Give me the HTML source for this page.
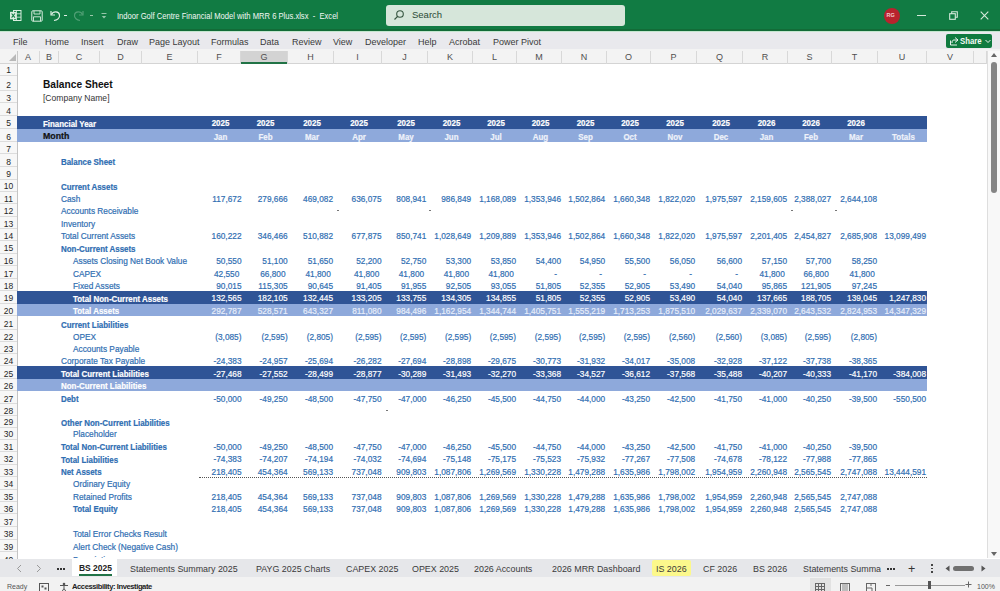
<!DOCTYPE html>
<html><head><meta charset="utf-8"><style>
*{margin:0;padding:0;box-sizing:border-box}
html,body{width:1000px;height:591px;overflow:hidden;background:#fff;font-family:"Liberation Sans",sans-serif}
.a{position:absolute}
.t{position:absolute;white-space:nowrap;line-height:1}
.c{font-size:9px;color:#2f6eb2;transform:scaleX(0.92);-webkit-text-stroke:0.2px currentColor}
.tl{transform-origin:0 50%}.tr{transform-origin:100% 50%}
.n{text-align:right}
.b{font-weight:bold;font-size:8.8px;transform:scaleX(0.9)}
.ch{position:absolute;top:51px;height:12.5px;font-size:9px;color:#505050;text-align:center;line-height:12.5px;border-right:1px solid #d8d8d8}
.rh{position:absolute;left:0;width:17px;font-size:8.3px;color:#333;text-align:center;border-bottom:1px solid #dcdcdc}
.mt{position:absolute;top:37px;font-size:9px;color:#3a3a3a;white-space:nowrap;line-height:10px}
.tab{position:absolute;top:563.4px;font-size:9.9px;color:#3a3a3a;white-space:nowrap;line-height:11px;transform:scaleX(0.9);transform-origin:0 50%}
</style></head><body>

<div class="a" style="left:0;top:0;width:1000px;height:31px;background:#117b43"></div>
<div class="a" style="left:0;top:28.6px;width:1000px;height:2.2px;background:#126b37"></div>
<div class="a" style="left:0;top:30.8px;width:1000px;height:1.2px;background:#c4e6cf"></div>
<div class="a" style="left:386px;top:5px;width:239px;height:21px;background:#d6e6da;border-radius:3px"></div>
<div class="t" style="left:412px;top:10px;font-size:9.5px;color:#2a4a35">Search</div>
<svg class="a" style="left:393px;top:9px" width="12" height="12" viewBox="0 0 12 12"><circle cx="7" cy="5" r="3.3" fill="none" stroke="#35553f" stroke-width="1.1"/><line x1="4.6" y1="7.4" x2="1.5" y2="10.5" stroke="#35553f" stroke-width="1.2"/></svg>
<div class="t" style="left:117px;top:12px;font-size:8.6px;transform:scaleX(0.885);transform-origin:0 50%;color:#f2f8f4">Indoor Golf Centre Financial Model with MRR 6 Plus.xlsx&nbsp;&nbsp;-&nbsp;&nbsp;Excel</div>
<svg class="a" style="left:9px;top:9px" width="13" height="13" viewBox="0 0 13 13"><rect x="4.5" y="1.5" width="7.5" height="10" fill="none" stroke="#d9eee0" stroke-width="1"/><line x1="7.5" y1="1.5" x2="7.5" y2="11.5" stroke="#d9eee0" stroke-width="0.8"/><line x1="7.5" y1="4.8" x2="12" y2="4.8" stroke="#d9eee0" stroke-width="0.8"/><line x1="7.5" y1="8.2" x2="12" y2="8.2" stroke="#d9eee0" stroke-width="0.8"/><rect x="1" y="2.8" width="6.5" height="7.5" fill="#d9eee0"/><path d="M2.6 4.5 L5.9 8.6 M5.9 4.5 L2.6 8.6" stroke="#117b43" stroke-width="1.1"/></svg>
<svg class="a" style="left:31px;top:9.5px" width="12" height="12" viewBox="0 0 12 12"><rect x="0.8" y="0.8" width="10.4" height="10.4" rx="1" fill="none" stroke="#d9eee0" stroke-width="1"/><path d="M3 0.8 V4 H9 V0.8" fill="none" stroke="#d9eee0" stroke-width="0.9"/><path d="M2.5 11.2 V6.8 H9.5 V11.2" fill="none" stroke="#d9eee0" stroke-width="0.9"/></svg>
<svg class="a" style="left:49px;top:8px" width="14" height="14" viewBox="0 0 14 14"><path d="M2 3 L2 7 L6 7" fill="none" stroke="#dff0e5" stroke-width="1.2"/><path d="M2.5 6.5 C4 3 10 3 10.5 7 C11 10 8 12 5 12.5" fill="none" stroke="#dff0e5" stroke-width="1.2"/></svg>
<div class="a" style="left:64px;top:15px;width:3px;height:1px;background:#dff0e5"></div>
<svg class="a" style="left:71px;top:8px" width="14" height="14" viewBox="0 0 14 14" opacity="0.3"><path d="M12 3 L12 7 L8 7" fill="none" stroke="#dff0e5" stroke-width="1.2"/><path d="M11.5 6.5 C10 3 4 3 3.5 7 C3 10 6 12 9 12.5" fill="none" stroke="#dff0e5" stroke-width="1.2"/></svg>
<div class="a" style="left:90px;top:15px;width:3px;height:1px;background:#9cc7aa"></div>
<svg class="a" style="left:100px;top:12px" width="8" height="9" viewBox="0 0 8 9" opacity="0.7"><line x1="1.5" y1="1.5" x2="6.5" y2="1.5" stroke="#cfe5d6"/><path d="M1.8 4 L6.2 4 L4 6.5 Z" fill="#cfe5d6"/></svg>
<div class="a" style="left:883.5px;top:7.5px;width:16px;height:16px;border-radius:50%;background:#b8232d"></div>
<div class="t" style="left:886.5px;top:12.5px;font-size:5.5px;color:#f3c9cc;font-weight:bold">RG</div>
<div class="a" style="left:917px;top:14.5px;width:9px;height:1.3px;background:#d5e9db"></div>
<svg class="a" style="left:949px;top:11px" width="9" height="9" viewBox="0 0 9 9"><rect x="0.7" y="2.7" width="5.6" height="5.6" fill="none" stroke="#d5e9db" stroke-width="1.1"/><path d="M2.7 2.7 V0.7 H8.3 V6.3 H6.3" fill="none" stroke="#d5e9db" stroke-width="1.1"/></svg>
<svg class="a" style="left:980px;top:11px" width="9" height="9" viewBox="0 0 9 9"><path d="M0.7 0.7 L8.3 8.3 M8.3 0.7 L0.7 8.3" stroke="#d5e9db" stroke-width="1.1"/></svg>
<div class="a" style="left:0;top:32px;width:1000px;height:17px;background:#e9e9ed"></div>
<div class="a" style="left:0;top:49px;width:1000px;height:2px;background:#f3f3f3"></div>
<div class="mt" style="left:13px">File</div>
<div class="mt" style="left:45px">Home</div>
<div class="mt" style="left:81px">Insert</div>
<div class="mt" style="left:117px">Draw</div>
<div class="mt" style="left:149px">Page Layout</div>
<div class="mt" style="left:211px">Formulas</div>
<div class="mt" style="left:260px">Data</div>
<div class="mt" style="left:292px">Review</div>
<div class="mt" style="left:333px">View</div>
<div class="mt" style="left:365px">Developer</div>
<div class="mt" style="left:418px">Help</div>
<div class="mt" style="left:449px">Acrobat</div>
<div class="mt" style="left:493px">Power Pivot</div>
<div class="a" style="left:946px;top:33.6px;width:46px;height:14.7px;background:#0f7a3f;border-radius:2px"></div>
<div class="t" style="left:959.5px;top:37px;font-size:9.3px;font-weight:bold;transform:scaleX(0.84);transform-origin:0 50%;color:#f4fbf6">Share</div>
<svg class="a" style="left:949px;top:36px" width="10" height="10" viewBox="0 0 10 10"><path d="M1.5 4.5 V9 H8 M6 1.5 L9 4 L6 6.5 M9 4 H5 C3.5 4 3 5 3 7" fill="none" stroke="#fff" stroke-width="0.9"/></svg>
<svg class="a" style="left:985px;top:39px" width="6" height="5" viewBox="0 0 6 5"><path d="M0.5 1 L3 3.5 L5.5 1" fill="none" stroke="#fff" stroke-width="0.9"/></svg>
<div class="a" style="left:0;top:51px;width:987px;height:12.5px;background:#f3f3f3;border-bottom:1px solid #d4d4d4"></div>
<svg class="a" style="left:7px;top:53px" width="10" height="9" viewBox="0 0 10 9"><path d="M9 1 L9 8 L2 8 Z" fill="#b8b8b8"/></svg>
<div class="a" style="left:16.5px;top:51px;width:1px;height:12.5px;background:#c8c8c8"></div>
<div class="ch" style="left:17px;width:23px">A</div>
<div class="ch" style="left:40px;width:19px">B</div>
<div class="ch" style="left:59px;width:41px">C</div>
<div class="ch" style="left:100px;width:42px">D</div>
<div class="ch" style="left:142px;width:56px">E</div>
<div class="ch" style="left:198px;width:43px">F</div>
<div class="a" style="left:241px;top:51px;width:47px;height:12.5px;background:#d3d3d3"></div>
<div class="a" style="left:241px;top:62px;width:47px;height:1.6px;background:#217346"></div>
<div class="ch" style="left:241px;width:47px">G</div>
<div class="ch" style="left:288px;width:46px">H</div>
<div class="ch" style="left:334px;width:48px">I</div>
<div class="ch" style="left:382px;width:46px">J</div>
<div class="ch" style="left:428px;width:45px">K</div>
<div class="ch" style="left:473px;width:44px">L</div>
<div class="ch" style="left:517px;width:45px">M</div>
<div class="ch" style="left:562px;width:45px">N</div>
<div class="ch" style="left:607px;width:44px">O</div>
<div class="ch" style="left:651px;width:46px">P</div>
<div class="ch" style="left:697px;width:46px">Q</div>
<div class="ch" style="left:743px;width:45px">R</div>
<div class="ch" style="left:788px;width:44px">S</div>
<div class="ch" style="left:832px;width:46px">T</div>
<div class="ch" style="left:878px;width:49px">U</div>
<div class="ch" style="left:927px;width:47px">V</div>
<div class="ch" style="left:974px;width:13px"></div>
<div class="a" style="left:0;top:63.5px;width:17.5px;height:495px;background:#f7f7f7;border-right:1px solid #c4c4c4"></div>
<div class="rh" style="top:63.50px;height:12.00px"></div>
<div class="t" style="left:0;width:17px;text-align:center;font-size:8.5px;color:#262626;top:66.10px">1</div>
<div class="rh" style="top:75.50px;height:15.00px"></div>
<div class="t" style="left:0;width:17px;text-align:center;font-size:8.5px;color:#262626;top:81.10px">2</div>
<div class="rh" style="top:90.50px;height:12.80px"></div>
<div class="t" style="left:0;width:17px;text-align:center;font-size:8.5px;color:#262626;top:93.90px">3</div>
<div class="rh" style="top:103.30px;height:12.70px"></div>
<div class="t" style="left:0;width:17px;text-align:center;font-size:8.5px;color:#262626;top:106.60px">4</div>
<div class="rh" style="top:116.00px;height:12.50px"></div>
<div class="t" style="left:0;width:17px;text-align:center;font-size:8.5px;color:#262626;top:119.10px">5</div>
<div class="rh" style="top:128.50px;height:13.50px"></div>
<div class="t" style="left:0;width:17px;text-align:center;font-size:8.5px;color:#262626;top:132.60px">6</div>
<div class="rh" style="top:142.00px;height:12.20px"></div>
<div class="t" style="left:0;width:17px;text-align:center;font-size:8.5px;color:#262626;top:144.80px">7</div>
<div class="rh" style="top:154.20px;height:12.70px"></div>
<div class="t" style="left:0;width:17px;text-align:center;font-size:8.5px;color:#262626;top:157.50px">8</div>
<div class="rh" style="top:166.90px;height:12.70px"></div>
<div class="t" style="left:0;width:17px;text-align:center;font-size:8.5px;color:#262626;top:170.20px">9</div>
<div class="rh" style="top:179.60px;height:12.20px"></div>
<div class="t" style="left:0;width:17px;text-align:center;font-size:8.5px;color:#262626;top:182.40px">10</div>
<div class="rh" style="top:191.80px;height:12.30px"></div>
<div class="t" style="left:0;width:17px;text-align:center;font-size:8.5px;color:#262626;top:194.70px">11</div>
<div class="rh" style="top:204.10px;height:12.70px"></div>
<div class="t" style="left:0;width:17px;text-align:center;font-size:8.5px;color:#262626;top:207.40px">12</div>
<div class="rh" style="top:216.80px;height:12.60px"></div>
<div class="t" style="left:0;width:17px;text-align:center;font-size:8.5px;color:#262626;top:220.00px">13</div>
<div class="rh" style="top:229.40px;height:11.70px"></div>
<div class="t" style="left:0;width:17px;text-align:center;font-size:8.5px;color:#262626;top:231.70px">14</div>
<div class="rh" style="top:241.10px;height:12.70px"></div>
<div class="t" style="left:0;width:17px;text-align:center;font-size:8.5px;color:#262626;top:244.40px">15</div>
<div class="rh" style="top:253.80px;height:12.50px"></div>
<div class="t" style="left:0;width:17px;text-align:center;font-size:8.5px;color:#262626;top:256.90px">16</div>
<div class="rh" style="top:266.30px;height:12.60px"></div>
<div class="t" style="left:0;width:17px;text-align:center;font-size:8.5px;color:#262626;top:269.50px">17</div>
<div class="rh" style="top:278.90px;height:12.50px"></div>
<div class="t" style="left:0;width:17px;text-align:center;font-size:8.5px;color:#262626;top:282.00px">18</div>
<div class="rh" style="top:291.40px;height:12.30px"></div>
<div class="t" style="left:0;width:17px;text-align:center;font-size:8.5px;color:#262626;top:294.30px">19</div>
<div class="rh" style="top:303.70px;height:12.80px"></div>
<div class="t" style="left:0;width:17px;text-align:center;font-size:8.5px;color:#262626;top:307.10px">20</div>
<div class="rh" style="top:316.50px;height:13.20px"></div>
<div class="t" style="left:0;width:17px;text-align:center;font-size:8.5px;color:#262626;top:320.30px">21</div>
<div class="rh" style="top:329.70px;height:12.20px"></div>
<div class="t" style="left:0;width:17px;text-align:center;font-size:8.5px;color:#262626;top:332.50px">22</div>
<div class="rh" style="top:341.90px;height:12.20px"></div>
<div class="t" style="left:0;width:17px;text-align:center;font-size:8.5px;color:#262626;top:344.70px">23</div>
<div class="rh" style="top:354.10px;height:12.20px"></div>
<div class="t" style="left:0;width:17px;text-align:center;font-size:8.5px;color:#262626;top:356.90px">24</div>
<div class="rh" style="top:366.30px;height:12.70px"></div>
<div class="t" style="left:0;width:17px;text-align:center;font-size:8.5px;color:#262626;top:369.60px">25</div>
<div class="rh" style="top:379.00px;height:12.20px"></div>
<div class="t" style="left:0;width:17px;text-align:center;font-size:8.5px;color:#262626;top:381.80px">26</div>
<div class="rh" style="top:391.20px;height:13.20px"></div>
<div class="t" style="left:0;width:17px;text-align:center;font-size:8.5px;color:#262626;top:395.00px">27</div>
<div class="rh" style="top:404.40px;height:11.70px"></div>
<div class="t" style="left:0;width:17px;text-align:center;font-size:8.5px;color:#262626;top:406.70px">28</div>
<div class="rh" style="top:416.10px;height:11.70px"></div>
<div class="t" style="left:0;width:17px;text-align:center;font-size:8.5px;color:#262626;top:418.40px">29</div>
<div class="rh" style="top:427.80px;height:12.00px"></div>
<div class="t" style="left:0;width:17px;text-align:center;font-size:8.5px;color:#262626;top:430.40px">30</div>
<div class="rh" style="top:439.80px;height:12.70px"></div>
<div class="t" style="left:0;width:17px;text-align:center;font-size:8.5px;color:#262626;top:443.10px">31</div>
<div class="rh" style="top:452.50px;height:12.20px"></div>
<div class="t" style="left:0;width:17px;text-align:center;font-size:8.5px;color:#262626;top:455.30px">32</div>
<div class="rh" style="top:464.70px;height:12.70px"></div>
<div class="t" style="left:0;width:17px;text-align:center;font-size:8.5px;color:#262626;top:468.00px">33</div>
<div class="rh" style="top:477.40px;height:12.30px"></div>
<div class="t" style="left:0;width:17px;text-align:center;font-size:8.5px;color:#262626;top:480.30px">34</div>
<div class="rh" style="top:489.70px;height:12.30px"></div>
<div class="t" style="left:0;width:17px;text-align:center;font-size:8.5px;color:#262626;top:492.60px">35</div>
<div class="rh" style="top:502.00px;height:12.20px"></div>
<div class="t" style="left:0;width:17px;text-align:center;font-size:8.5px;color:#262626;top:504.80px">36</div>
<div class="rh" style="top:514.20px;height:12.70px"></div>
<div class="t" style="left:0;width:17px;text-align:center;font-size:8.5px;color:#262626;top:517.50px">37</div>
<div class="rh" style="top:526.90px;height:12.70px"></div>
<div class="t" style="left:0;width:17px;text-align:center;font-size:8.5px;color:#262626;top:530.20px">38</div>
<div class="rh" style="top:539.60px;height:12.70px"></div>
<div class="t" style="left:0;width:17px;text-align:center;font-size:8.5px;color:#262626;top:542.90px">39</div>
<div class="rh" style="top:552.30px;height:12.70px"></div>
<div class="t" style="left:0;width:17px;text-align:center;font-size:8.5px;color:#262626;top:555.60px">40</div>
<div class="a" style="left:17px;top:116.00px;width:910px;height:12.50px;background:#2f5496"></div>
<div class="a" style="left:17px;top:128.50px;width:910px;height:13.50px;background:#8ea9db"></div>
<div class="a" style="left:17px;top:291.40px;width:910px;height:12.30px;background:#2f5496"></div>
<div class="a" style="left:17px;top:303.70px;width:910px;height:12.80px;background:#8ea9db"></div>
<div class="a" style="left:17px;top:366.30px;width:910px;height:12.70px;background:#2f5496"></div>
<div class="a" style="left:17px;top:379.00px;width:910px;height:12.20px;background:#8ea9db"></div>
<div class="a" style="left:199px;top:476.70px;width:728px;height:0;border-top:1px dotted #555"></div>
<div class="t" style="left:43px;top:79.5px;font-size:10.2px;font-weight:bold;color:#111">Balance Sheet</div>
<div class="t" style="left:43px;top:93.5px;font-size:8.55px;color:#333">[Company Name]</div>
<div class="t c b tl" style="left:43px;top:119.60px;color:#fff">Financial Year</div>
<div class="t c b tl" style="left:43px;top:132.30px;color:#111;transform:scaleX(1.0)">Month</div>
<div class="t c b" style="left:198.5px;width:43px;text-align:center;top:119.05px;color:#fff">2025</div>
<div class="t c b" style="left:198.5px;width:43px;text-align:center;top:132.55px;color:#eef2fa">Jan</div>
<div class="t c b" style="left:241.5px;width:47px;text-align:center;top:119.05px;color:#fff">2025</div>
<div class="t c b" style="left:241.5px;width:47px;text-align:center;top:132.55px;color:#eef2fa">Feb</div>
<div class="t c b" style="left:288.5px;width:46px;text-align:center;top:119.05px;color:#fff">2025</div>
<div class="t c b" style="left:288.5px;width:46px;text-align:center;top:132.55px;color:#eef2fa">Mar</div>
<div class="t c b" style="left:334.5px;width:48px;text-align:center;top:119.05px;color:#fff">2025</div>
<div class="t c b" style="left:334.5px;width:48px;text-align:center;top:132.55px;color:#eef2fa">Apr</div>
<div class="t c b" style="left:382.5px;width:46px;text-align:center;top:119.05px;color:#fff">2025</div>
<div class="t c b" style="left:382.5px;width:46px;text-align:center;top:132.55px;color:#eef2fa">May</div>
<div class="t c b" style="left:428.5px;width:45px;text-align:center;top:119.05px;color:#fff">2025</div>
<div class="t c b" style="left:428.5px;width:45px;text-align:center;top:132.55px;color:#eef2fa">Jun</div>
<div class="t c b" style="left:473.5px;width:44px;text-align:center;top:119.05px;color:#fff">2025</div>
<div class="t c b" style="left:473.5px;width:44px;text-align:center;top:132.55px;color:#eef2fa">Jul</div>
<div class="t c b" style="left:517.5px;width:45px;text-align:center;top:119.05px;color:#fff">2025</div>
<div class="t c b" style="left:517.5px;width:45px;text-align:center;top:132.55px;color:#eef2fa">Aug</div>
<div class="t c b" style="left:562.5px;width:45px;text-align:center;top:119.05px;color:#fff">2025</div>
<div class="t c b" style="left:562.5px;width:45px;text-align:center;top:132.55px;color:#eef2fa">Sep</div>
<div class="t c b" style="left:607.5px;width:44px;text-align:center;top:119.05px;color:#fff">2025</div>
<div class="t c b" style="left:607.5px;width:44px;text-align:center;top:132.55px;color:#eef2fa">Oct</div>
<div class="t c b" style="left:651.5px;width:46px;text-align:center;top:119.05px;color:#fff">2025</div>
<div class="t c b" style="left:651.5px;width:46px;text-align:center;top:132.55px;color:#eef2fa">Nov</div>
<div class="t c b" style="left:697.5px;width:46px;text-align:center;top:119.05px;color:#fff">2025</div>
<div class="t c b" style="left:697.5px;width:46px;text-align:center;top:132.55px;color:#eef2fa">Dec</div>
<div class="t c b" style="left:743.5px;width:45px;text-align:center;top:119.05px;color:#fff">2026</div>
<div class="t c b" style="left:743.5px;width:45px;text-align:center;top:132.55px;color:#eef2fa">Jan</div>
<div class="t c b" style="left:788.5px;width:44px;text-align:center;top:119.05px;color:#fff">2026</div>
<div class="t c b" style="left:788.5px;width:44px;text-align:center;top:132.55px;color:#eef2fa">Feb</div>
<div class="t c b" style="left:832.5px;width:46px;text-align:center;top:119.05px;color:#fff">2026</div>
<div class="t c b" style="left:832.5px;width:46px;text-align:center;top:132.55px;color:#eef2fa">Mar</div>
<div class="t c b" style="left:878.5px;width:49px;text-align:center;top:132.55px;color:#eef2fa">Totals</div>
<div class="t c b tl" style="left:61px;top:157.75px;color:#2f6eb2">Balance Sheet</div>
<div class="t c b tl" style="left:61px;top:182.65px;color:#2f6eb2">Current Assets</div>
<div class="t c tl" style="left:61px;top:194.78px;color:#2f6eb2">Cash</div>
<div class="t c tl" style="left:61px;top:207.48px;color:#2f6eb2">Accounts Receivable</div>
<div class="t c tl" style="left:61px;top:220.08px;color:#2f6eb2">Inventory</div>
<div class="t c tl" style="left:61px;top:231.78px;color:#2f6eb2">Total Current Assets</div>
<div class="t c b tl" style="left:61px;top:244.65px;color:#2f6eb2">Non-Current Assets</div>
<div class="t c tl" style="left:73px;top:256.98px;color:#2f6eb2">Assets Closing Net Book Value</div>
<div class="t c tl" style="left:73px;top:269.58px;color:#2f6eb2">CAPEX</div>
<div class="t c tl" style="left:73px;top:282.08px;color:#2f6eb2">Fixed Assets</div>
<div class="t c b tl" style="left:73px;top:294.55px;color:#fff">Total Non-Current Assets</div>
<div class="t c b tl" style="left:73px;top:307.35px;color:#fff">Total Assets</div>
<div class="t c b tl" style="left:61px;top:320.55px;color:#2f6eb2">Current Liabilities</div>
<div class="t c tl" style="left:73px;top:332.58px;color:#2f6eb2">OPEX</div>
<div class="t c tl" style="left:73px;top:344.78px;color:#2f6eb2">Accounts Payable</div>
<div class="t c tl" style="left:61px;top:356.98px;color:#2f6eb2">Corporate Tax Payable</div>
<div class="t c b tl" style="left:61px;top:369.85px;color:#fff">Total Current Liabilities</div>
<div class="t c b tl" style="left:61px;top:382.05px;color:#fff">Non-Current Liabilities</div>
<div class="t c b tl" style="left:61px;top:395.25px;color:#2f6eb2">Debt</div>
<div class="t c b tl" style="left:61px;top:418.65px;color:#2f6eb2">Other Non-Current Liabilities</div>
<div class="t c tl" style="left:73px;top:430.48px;color:#2f6eb2">Placeholder</div>
<div class="t c b tl" style="left:61px;top:443.35px;color:#2f6eb2">Total Non-Current Liabilities</div>
<div class="t c b tl" style="left:61px;top:455.55px;color:#2f6eb2">Total Liabilities</div>
<div class="t c b tl" style="left:61px;top:468.25px;color:#2f6eb2">Net Assets</div>
<div class="t c tl" style="left:73px;top:480.38px;color:#2f6eb2">Ordinary Equity</div>
<div class="t c tl" style="left:73px;top:492.68px;color:#2f6eb2">Retained Profits</div>
<div class="t c b tl" style="left:73px;top:505.05px;color:#2f6eb2">Total Equity</div>
<div class="t c tl" style="left:73px;top:530.28px;color:#2f6eb2">Total Error Checks Result</div>
<div class="t c tl" style="left:73px;top:542.98px;color:#2f6eb2">Alert Check (Negative Cash)</div>
<div class="t c tl" style="left:73px;top:555.68px;color:#2f6eb2">Description</div>
<div class="t c tr" style="left:198px;width:43.5px;text-align:right;top:194.78px;color:#2f6eb2">117,672</div>
<div class="t c tr" style="left:241px;width:46.7px;text-align:right;top:194.78px;color:#2f6eb2">279,666</div>
<div class="t c tr" style="left:288px;width:45px;text-align:right;top:194.78px;color:#2f6eb2">469,082</div>
<div class="t c tr" style="left:334px;width:47.5px;text-align:right;top:194.78px;color:#2f6eb2">636,075</div>
<div class="t c tr" style="left:382px;width:44.3px;text-align:right;top:194.78px;color:#2f6eb2">808,941</div>
<div class="t c tr" style="left:428px;width:43.2px;text-align:right;top:194.78px;color:#2f6eb2">986,849</div>
<div class="t c tr" style="left:473px;width:43px;text-align:right;top:194.78px;color:#2f6eb2">1,168,089</div>
<div class="t c tr" style="left:517px;width:44px;text-align:right;top:194.78px;color:#2f6eb2">1,353,946</div>
<div class="t c tr" style="left:562px;width:43.2px;text-align:right;top:194.78px;color:#2f6eb2">1,502,864</div>
<div class="t c tr" style="left:607px;width:43px;text-align:right;top:194.78px;color:#2f6eb2">1,660,348</div>
<div class="t c tr" style="left:651px;width:44.2px;text-align:right;top:194.78px;color:#2f6eb2">1,822,020</div>
<div class="t c tr" style="left:697px;width:45px;text-align:right;top:194.78px;color:#2f6eb2">1,975,597</div>
<div class="t c tr" style="left:743px;width:44px;text-align:right;top:194.78px;color:#2f6eb2">2,159,605</div>
<div class="t c tr" style="left:788px;width:43px;text-align:right;top:194.78px;color:#2f6eb2">2,388,027</div>
<div class="t c tr" style="left:832px;width:45px;text-align:right;top:194.78px;color:#2f6eb2">2,644,108</div>
<div class="t c tr" style="left:198px;width:43.5px;text-align:right;top:231.78px;color:#2f6eb2">160,222</div>
<div class="t c tr" style="left:241px;width:46.7px;text-align:right;top:231.78px;color:#2f6eb2">346,466</div>
<div class="t c tr" style="left:288px;width:45px;text-align:right;top:231.78px;color:#2f6eb2">510,882</div>
<div class="t c tr" style="left:334px;width:47.5px;text-align:right;top:231.78px;color:#2f6eb2">677,875</div>
<div class="t c tr" style="left:382px;width:44.3px;text-align:right;top:231.78px;color:#2f6eb2">850,741</div>
<div class="t c tr" style="left:428px;width:43.2px;text-align:right;top:231.78px;color:#2f6eb2">1,028,649</div>
<div class="t c tr" style="left:473px;width:43px;text-align:right;top:231.78px;color:#2f6eb2">1,209,889</div>
<div class="t c tr" style="left:517px;width:44px;text-align:right;top:231.78px;color:#2f6eb2">1,353,946</div>
<div class="t c tr" style="left:562px;width:43.2px;text-align:right;top:231.78px;color:#2f6eb2">1,502,864</div>
<div class="t c tr" style="left:607px;width:43px;text-align:right;top:231.78px;color:#2f6eb2">1,660,348</div>
<div class="t c tr" style="left:651px;width:44.2px;text-align:right;top:231.78px;color:#2f6eb2">1,822,020</div>
<div class="t c tr" style="left:697px;width:45px;text-align:right;top:231.78px;color:#2f6eb2">1,975,597</div>
<div class="t c tr" style="left:743px;width:44px;text-align:right;top:231.78px;color:#2f6eb2">2,201,405</div>
<div class="t c tr" style="left:788px;width:43px;text-align:right;top:231.78px;color:#2f6eb2">2,454,827</div>
<div class="t c tr" style="left:832px;width:45px;text-align:right;top:231.78px;color:#2f6eb2">2,685,908</div>
<div class="t c tr" style="left:878px;width:48px;text-align:right;top:231.78px;color:#2f6eb2">13,099,499</div>
<div class="t c tr" style="left:198px;width:43.5px;text-align:right;top:256.98px;color:#2f6eb2">50,550</div>
<div class="t c tr" style="left:241px;width:46.7px;text-align:right;top:256.98px;color:#2f6eb2">51,100</div>
<div class="t c tr" style="left:288px;width:45px;text-align:right;top:256.98px;color:#2f6eb2">51,650</div>
<div class="t c tr" style="left:334px;width:47.5px;text-align:right;top:256.98px;color:#2f6eb2">52,200</div>
<div class="t c tr" style="left:382px;width:44.3px;text-align:right;top:256.98px;color:#2f6eb2">52,750</div>
<div class="t c tr" style="left:428px;width:43.2px;text-align:right;top:256.98px;color:#2f6eb2">53,300</div>
<div class="t c tr" style="left:473px;width:43px;text-align:right;top:256.98px;color:#2f6eb2">53,850</div>
<div class="t c tr" style="left:517px;width:44px;text-align:right;top:256.98px;color:#2f6eb2">54,400</div>
<div class="t c tr" style="left:562px;width:43.2px;text-align:right;top:256.98px;color:#2f6eb2">54,950</div>
<div class="t c tr" style="left:607px;width:43px;text-align:right;top:256.98px;color:#2f6eb2">55,500</div>
<div class="t c tr" style="left:651px;width:44.2px;text-align:right;top:256.98px;color:#2f6eb2">56,050</div>
<div class="t c tr" style="left:697px;width:45px;text-align:right;top:256.98px;color:#2f6eb2">56,600</div>
<div class="t c tr" style="left:743px;width:44px;text-align:right;top:256.98px;color:#2f6eb2">57,150</div>
<div class="t c tr" style="left:788px;width:43px;text-align:right;top:256.98px;color:#2f6eb2">57,700</div>
<div class="t c tr" style="left:832px;width:45px;text-align:right;top:256.98px;color:#2f6eb2">58,250</div>
<div class="t c tr" style="left:198px;width:41.3px;text-align:right;top:269.58px;color:#2f6eb2">42,550</div>
<div class="t c tr" style="left:241px;width:44.5px;text-align:right;top:269.58px;color:#2f6eb2">66,800</div>
<div class="t c tr" style="left:288px;width:42.8px;text-align:right;top:269.58px;color:#2f6eb2">41,800</div>
<div class="t c tr" style="left:334px;width:45.3px;text-align:right;top:269.58px;color:#2f6eb2">41,800</div>
<div class="t c tr" style="left:382px;width:42.1px;text-align:right;top:269.58px;color:#2f6eb2">41,800</div>
<div class="t c tr" style="left:428px;width:41.0px;text-align:right;top:269.58px;color:#2f6eb2">41,800</div>
<div class="t c tr" style="left:473px;width:40.8px;text-align:right;top:269.58px;color:#2f6eb2">41,800</div>
<div class="t c tr" style="left:517px;width:40px;text-align:right;top:269.58px;color:#2f6eb2">-</div>
<div class="t c tr" style="left:562px;width:40px;text-align:right;top:269.58px;color:#2f6eb2">-</div>
<div class="t c tr" style="left:607px;width:39px;text-align:right;top:269.58px;color:#2f6eb2">-</div>
<div class="t c tr" style="left:651px;width:41px;text-align:right;top:269.58px;color:#2f6eb2">-</div>
<div class="t c tr" style="left:697px;width:41px;text-align:right;top:269.58px;color:#2f6eb2">-</div>
<div class="t c tr" style="left:743px;width:41.8px;text-align:right;top:269.58px;color:#2f6eb2">41,800</div>
<div class="t c tr" style="left:788px;width:40.8px;text-align:right;top:269.58px;color:#2f6eb2">66,800</div>
<div class="t c tr" style="left:832px;width:42.8px;text-align:right;top:269.58px;color:#2f6eb2">41,800</div>
<div class="t c tr" style="left:198px;width:43.5px;text-align:right;top:282.08px;color:#2f6eb2">90,015</div>
<div class="t c tr" style="left:241px;width:46.7px;text-align:right;top:282.08px;color:#2f6eb2">115,305</div>
<div class="t c tr" style="left:288px;width:45px;text-align:right;top:282.08px;color:#2f6eb2">90,645</div>
<div class="t c tr" style="left:334px;width:47.5px;text-align:right;top:282.08px;color:#2f6eb2">91,405</div>
<div class="t c tr" style="left:382px;width:44.3px;text-align:right;top:282.08px;color:#2f6eb2">91,955</div>
<div class="t c tr" style="left:428px;width:43.2px;text-align:right;top:282.08px;color:#2f6eb2">92,505</div>
<div class="t c tr" style="left:473px;width:43px;text-align:right;top:282.08px;color:#2f6eb2">93,055</div>
<div class="t c tr" style="left:517px;width:44px;text-align:right;top:282.08px;color:#2f6eb2">51,805</div>
<div class="t c tr" style="left:562px;width:43.2px;text-align:right;top:282.08px;color:#2f6eb2">52,355</div>
<div class="t c tr" style="left:607px;width:43px;text-align:right;top:282.08px;color:#2f6eb2">52,905</div>
<div class="t c tr" style="left:651px;width:44.2px;text-align:right;top:282.08px;color:#2f6eb2">53,490</div>
<div class="t c tr" style="left:697px;width:45px;text-align:right;top:282.08px;color:#2f6eb2">54,040</div>
<div class="t c tr" style="left:743px;width:44px;text-align:right;top:282.08px;color:#2f6eb2">95,865</div>
<div class="t c tr" style="left:788px;width:43px;text-align:right;top:282.08px;color:#2f6eb2">121,905</div>
<div class="t c tr" style="left:832px;width:45px;text-align:right;top:282.08px;color:#2f6eb2">97,245</div>
<div class="t c tr" style="left:198px;width:43.5px;text-align:right;top:294.38px;color:#fff">132,565</div>
<div class="t c tr" style="left:241px;width:46.7px;text-align:right;top:294.38px;color:#fff">182,105</div>
<div class="t c tr" style="left:288px;width:45px;text-align:right;top:294.38px;color:#fff">132,445</div>
<div class="t c tr" style="left:334px;width:47.5px;text-align:right;top:294.38px;color:#fff">133,205</div>
<div class="t c tr" style="left:382px;width:44.3px;text-align:right;top:294.38px;color:#fff">133,755</div>
<div class="t c tr" style="left:428px;width:43.2px;text-align:right;top:294.38px;color:#fff">134,305</div>
<div class="t c tr" style="left:473px;width:43px;text-align:right;top:294.38px;color:#fff">134,855</div>
<div class="t c tr" style="left:517px;width:44px;text-align:right;top:294.38px;color:#fff">51,805</div>
<div class="t c tr" style="left:562px;width:43.2px;text-align:right;top:294.38px;color:#fff">52,355</div>
<div class="t c tr" style="left:607px;width:43px;text-align:right;top:294.38px;color:#fff">52,905</div>
<div class="t c tr" style="left:651px;width:44.2px;text-align:right;top:294.38px;color:#fff">53,490</div>
<div class="t c tr" style="left:697px;width:45px;text-align:right;top:294.38px;color:#fff">54,040</div>
<div class="t c tr" style="left:743px;width:44px;text-align:right;top:294.38px;color:#fff">137,665</div>
<div class="t c tr" style="left:788px;width:43px;text-align:right;top:294.38px;color:#fff">188,705</div>
<div class="t c tr" style="left:832px;width:45px;text-align:right;top:294.38px;color:#fff">139,045</div>
<div class="t c tr" style="left:878px;width:48px;text-align:right;top:294.38px;color:#fff">1,247,830</div>
<div class="t c tr" style="left:198px;width:43.5px;text-align:right;top:307.18px;color:#e8eefa">292,787</div>
<div class="t c tr" style="left:241px;width:46.7px;text-align:right;top:307.18px;color:#e8eefa">528,571</div>
<div class="t c tr" style="left:288px;width:45px;text-align:right;top:307.18px;color:#e8eefa">643,327</div>
<div class="t c tr" style="left:334px;width:47.5px;text-align:right;top:307.18px;color:#e8eefa">811,080</div>
<div class="t c tr" style="left:382px;width:44.3px;text-align:right;top:307.18px;color:#e8eefa">984,496</div>
<div class="t c tr" style="left:428px;width:43.2px;text-align:right;top:307.18px;color:#e8eefa">1,162,954</div>
<div class="t c tr" style="left:473px;width:43px;text-align:right;top:307.18px;color:#e8eefa">1,344,744</div>
<div class="t c tr" style="left:517px;width:44px;text-align:right;top:307.18px;color:#e8eefa">1,405,751</div>
<div class="t c tr" style="left:562px;width:43.2px;text-align:right;top:307.18px;color:#e8eefa">1,555,219</div>
<div class="t c tr" style="left:607px;width:43px;text-align:right;top:307.18px;color:#e8eefa">1,713,253</div>
<div class="t c tr" style="left:651px;width:44.2px;text-align:right;top:307.18px;color:#e8eefa">1,875,510</div>
<div class="t c tr" style="left:697px;width:45px;text-align:right;top:307.18px;color:#e8eefa">2,029,637</div>
<div class="t c tr" style="left:743px;width:44px;text-align:right;top:307.18px;color:#e8eefa">2,339,070</div>
<div class="t c tr" style="left:788px;width:43px;text-align:right;top:307.18px;color:#e8eefa">2,643,532</div>
<div class="t c tr" style="left:832px;width:45px;text-align:right;top:307.18px;color:#e8eefa">2,824,953</div>
<div class="t c tr" style="left:878px;width:48px;text-align:right;top:307.18px;color:#e8eefa">14,347,329</div>
<div class="t c tr" style="left:198px;width:43.5px;text-align:right;top:332.58px;color:#2f6eb2">(3,085)</div>
<div class="t c tr" style="left:241px;width:46.7px;text-align:right;top:332.58px;color:#2f6eb2">(2,595)</div>
<div class="t c tr" style="left:288px;width:45px;text-align:right;top:332.58px;color:#2f6eb2">(2,805)</div>
<div class="t c tr" style="left:334px;width:47.5px;text-align:right;top:332.58px;color:#2f6eb2">(2,595)</div>
<div class="t c tr" style="left:382px;width:44.3px;text-align:right;top:332.58px;color:#2f6eb2">(2,595)</div>
<div class="t c tr" style="left:428px;width:43.2px;text-align:right;top:332.58px;color:#2f6eb2">(2,595)</div>
<div class="t c tr" style="left:473px;width:43px;text-align:right;top:332.58px;color:#2f6eb2">(2,595)</div>
<div class="t c tr" style="left:517px;width:44px;text-align:right;top:332.58px;color:#2f6eb2">(2,595)</div>
<div class="t c tr" style="left:562px;width:43.2px;text-align:right;top:332.58px;color:#2f6eb2">(2,595)</div>
<div class="t c tr" style="left:607px;width:43px;text-align:right;top:332.58px;color:#2f6eb2">(2,595)</div>
<div class="t c tr" style="left:651px;width:44.2px;text-align:right;top:332.58px;color:#2f6eb2">(2,560)</div>
<div class="t c tr" style="left:697px;width:45px;text-align:right;top:332.58px;color:#2f6eb2">(2,560)</div>
<div class="t c tr" style="left:743px;width:44px;text-align:right;top:332.58px;color:#2f6eb2">(3,085)</div>
<div class="t c tr" style="left:788px;width:43px;text-align:right;top:332.58px;color:#2f6eb2">(2,595)</div>
<div class="t c tr" style="left:832px;width:45px;text-align:right;top:332.58px;color:#2f6eb2">(2,805)</div>
<div class="t c tr" style="left:198px;width:43.5px;text-align:right;top:356.98px;color:#2f6eb2">-24,383</div>
<div class="t c tr" style="left:241px;width:46.7px;text-align:right;top:356.98px;color:#2f6eb2">-24,957</div>
<div class="t c tr" style="left:288px;width:45px;text-align:right;top:356.98px;color:#2f6eb2">-25,694</div>
<div class="t c tr" style="left:334px;width:47.5px;text-align:right;top:356.98px;color:#2f6eb2">-26,282</div>
<div class="t c tr" style="left:382px;width:44.3px;text-align:right;top:356.98px;color:#2f6eb2">-27,694</div>
<div class="t c tr" style="left:428px;width:43.2px;text-align:right;top:356.98px;color:#2f6eb2">-28,898</div>
<div class="t c tr" style="left:473px;width:43px;text-align:right;top:356.98px;color:#2f6eb2">-29,675</div>
<div class="t c tr" style="left:517px;width:44px;text-align:right;top:356.98px;color:#2f6eb2">-30,773</div>
<div class="t c tr" style="left:562px;width:43.2px;text-align:right;top:356.98px;color:#2f6eb2">-31,932</div>
<div class="t c tr" style="left:607px;width:43px;text-align:right;top:356.98px;color:#2f6eb2">-34,017</div>
<div class="t c tr" style="left:651px;width:44.2px;text-align:right;top:356.98px;color:#2f6eb2">-35,008</div>
<div class="t c tr" style="left:697px;width:45px;text-align:right;top:356.98px;color:#2f6eb2">-32,928</div>
<div class="t c tr" style="left:743px;width:44px;text-align:right;top:356.98px;color:#2f6eb2">-37,122</div>
<div class="t c tr" style="left:788px;width:43px;text-align:right;top:356.98px;color:#2f6eb2">-37,738</div>
<div class="t c tr" style="left:832px;width:45px;text-align:right;top:356.98px;color:#2f6eb2">-38,365</div>
<div class="t c tr" style="left:198px;width:43.5px;text-align:right;top:369.68px;color:#fff">-27,468</div>
<div class="t c tr" style="left:241px;width:46.7px;text-align:right;top:369.68px;color:#fff">-27,552</div>
<div class="t c tr" style="left:288px;width:45px;text-align:right;top:369.68px;color:#fff">-28,499</div>
<div class="t c tr" style="left:334px;width:47.5px;text-align:right;top:369.68px;color:#fff">-28,877</div>
<div class="t c tr" style="left:382px;width:44.3px;text-align:right;top:369.68px;color:#fff">-30,289</div>
<div class="t c tr" style="left:428px;width:43.2px;text-align:right;top:369.68px;color:#fff">-31,493</div>
<div class="t c tr" style="left:473px;width:43px;text-align:right;top:369.68px;color:#fff">-32,270</div>
<div class="t c tr" style="left:517px;width:44px;text-align:right;top:369.68px;color:#fff">-33,368</div>
<div class="t c tr" style="left:562px;width:43.2px;text-align:right;top:369.68px;color:#fff">-34,527</div>
<div class="t c tr" style="left:607px;width:43px;text-align:right;top:369.68px;color:#fff">-36,612</div>
<div class="t c tr" style="left:651px;width:44.2px;text-align:right;top:369.68px;color:#fff">-37,568</div>
<div class="t c tr" style="left:697px;width:45px;text-align:right;top:369.68px;color:#fff">-35,488</div>
<div class="t c tr" style="left:743px;width:44px;text-align:right;top:369.68px;color:#fff">-40,207</div>
<div class="t c tr" style="left:788px;width:43px;text-align:right;top:369.68px;color:#fff">-40,333</div>
<div class="t c tr" style="left:832px;width:45px;text-align:right;top:369.68px;color:#fff">-41,170</div>
<div class="t c tr" style="left:878px;width:48px;text-align:right;top:369.68px;color:#fff">-384,008</div>
<div class="t c tr" style="left:198px;width:43.5px;text-align:right;top:395.08px;color:#2f6eb2">-50,000</div>
<div class="t c tr" style="left:241px;width:46.7px;text-align:right;top:395.08px;color:#2f6eb2">-49,250</div>
<div class="t c tr" style="left:288px;width:45px;text-align:right;top:395.08px;color:#2f6eb2">-48,500</div>
<div class="t c tr" style="left:334px;width:47.5px;text-align:right;top:395.08px;color:#2f6eb2">-47,750</div>
<div class="t c tr" style="left:382px;width:44.3px;text-align:right;top:395.08px;color:#2f6eb2">-47,000</div>
<div class="t c tr" style="left:428px;width:43.2px;text-align:right;top:395.08px;color:#2f6eb2">-46,250</div>
<div class="t c tr" style="left:473px;width:43px;text-align:right;top:395.08px;color:#2f6eb2">-45,500</div>
<div class="t c tr" style="left:517px;width:44px;text-align:right;top:395.08px;color:#2f6eb2">-44,750</div>
<div class="t c tr" style="left:562px;width:43.2px;text-align:right;top:395.08px;color:#2f6eb2">-44,000</div>
<div class="t c tr" style="left:607px;width:43px;text-align:right;top:395.08px;color:#2f6eb2">-43,250</div>
<div class="t c tr" style="left:651px;width:44.2px;text-align:right;top:395.08px;color:#2f6eb2">-42,500</div>
<div class="t c tr" style="left:697px;width:45px;text-align:right;top:395.08px;color:#2f6eb2">-41,750</div>
<div class="t c tr" style="left:743px;width:44px;text-align:right;top:395.08px;color:#2f6eb2">-41,000</div>
<div class="t c tr" style="left:788px;width:43px;text-align:right;top:395.08px;color:#2f6eb2">-40,250</div>
<div class="t c tr" style="left:832px;width:45px;text-align:right;top:395.08px;color:#2f6eb2">-39,500</div>
<div class="t c tr" style="left:878px;width:48px;text-align:right;top:395.08px;color:#2f6eb2">-550,500</div>
<div class="t c tr" style="left:198px;width:43.5px;text-align:right;top:443.18px;color:#2f6eb2">-50,000</div>
<div class="t c tr" style="left:241px;width:46.7px;text-align:right;top:443.18px;color:#2f6eb2">-49,250</div>
<div class="t c tr" style="left:288px;width:45px;text-align:right;top:443.18px;color:#2f6eb2">-48,500</div>
<div class="t c tr" style="left:334px;width:47.5px;text-align:right;top:443.18px;color:#2f6eb2">-47,750</div>
<div class="t c tr" style="left:382px;width:44.3px;text-align:right;top:443.18px;color:#2f6eb2">-47,000</div>
<div class="t c tr" style="left:428px;width:43.2px;text-align:right;top:443.18px;color:#2f6eb2">-46,250</div>
<div class="t c tr" style="left:473px;width:43px;text-align:right;top:443.18px;color:#2f6eb2">-45,500</div>
<div class="t c tr" style="left:517px;width:44px;text-align:right;top:443.18px;color:#2f6eb2">-44,750</div>
<div class="t c tr" style="left:562px;width:43.2px;text-align:right;top:443.18px;color:#2f6eb2">-44,000</div>
<div class="t c tr" style="left:607px;width:43px;text-align:right;top:443.18px;color:#2f6eb2">-43,250</div>
<div class="t c tr" style="left:651px;width:44.2px;text-align:right;top:443.18px;color:#2f6eb2">-42,500</div>
<div class="t c tr" style="left:697px;width:45px;text-align:right;top:443.18px;color:#2f6eb2">-41,750</div>
<div class="t c tr" style="left:743px;width:44px;text-align:right;top:443.18px;color:#2f6eb2">-41,000</div>
<div class="t c tr" style="left:788px;width:43px;text-align:right;top:443.18px;color:#2f6eb2">-40,250</div>
<div class="t c tr" style="left:832px;width:45px;text-align:right;top:443.18px;color:#2f6eb2">-39,500</div>
<div class="t c tr" style="left:198px;width:43.5px;text-align:right;top:455.38px;color:#2f6eb2">-74,383</div>
<div class="t c tr" style="left:241px;width:46.7px;text-align:right;top:455.38px;color:#2f6eb2">-74,207</div>
<div class="t c tr" style="left:288px;width:45px;text-align:right;top:455.38px;color:#2f6eb2">-74,194</div>
<div class="t c tr" style="left:334px;width:47.5px;text-align:right;top:455.38px;color:#2f6eb2">-74,032</div>
<div class="t c tr" style="left:382px;width:44.3px;text-align:right;top:455.38px;color:#2f6eb2">-74,694</div>
<div class="t c tr" style="left:428px;width:43.2px;text-align:right;top:455.38px;color:#2f6eb2">-75,148</div>
<div class="t c tr" style="left:473px;width:43px;text-align:right;top:455.38px;color:#2f6eb2">-75,175</div>
<div class="t c tr" style="left:517px;width:44px;text-align:right;top:455.38px;color:#2f6eb2">-75,523</div>
<div class="t c tr" style="left:562px;width:43.2px;text-align:right;top:455.38px;color:#2f6eb2">-75,932</div>
<div class="t c tr" style="left:607px;width:43px;text-align:right;top:455.38px;color:#2f6eb2">-77,267</div>
<div class="t c tr" style="left:651px;width:44.2px;text-align:right;top:455.38px;color:#2f6eb2">-77,508</div>
<div class="t c tr" style="left:697px;width:45px;text-align:right;top:455.38px;color:#2f6eb2">-74,678</div>
<div class="t c tr" style="left:743px;width:44px;text-align:right;top:455.38px;color:#2f6eb2">-78,122</div>
<div class="t c tr" style="left:788px;width:43px;text-align:right;top:455.38px;color:#2f6eb2">-77,988</div>
<div class="t c tr" style="left:832px;width:45px;text-align:right;top:455.38px;color:#2f6eb2">-77,865</div>
<div class="t c tr" style="left:198px;width:43.5px;text-align:right;top:468.08px;color:#2f6eb2">218,405</div>
<div class="t c tr" style="left:241px;width:46.7px;text-align:right;top:468.08px;color:#2f6eb2">454,364</div>
<div class="t c tr" style="left:288px;width:45px;text-align:right;top:468.08px;color:#2f6eb2">569,133</div>
<div class="t c tr" style="left:334px;width:47.5px;text-align:right;top:468.08px;color:#2f6eb2">737,048</div>
<div class="t c tr" style="left:382px;width:44.3px;text-align:right;top:468.08px;color:#2f6eb2">909,803</div>
<div class="t c tr" style="left:428px;width:43.2px;text-align:right;top:468.08px;color:#2f6eb2">1,087,806</div>
<div class="t c tr" style="left:473px;width:43px;text-align:right;top:468.08px;color:#2f6eb2">1,269,569</div>
<div class="t c tr" style="left:517px;width:44px;text-align:right;top:468.08px;color:#2f6eb2">1,330,228</div>
<div class="t c tr" style="left:562px;width:43.2px;text-align:right;top:468.08px;color:#2f6eb2">1,479,288</div>
<div class="t c tr" style="left:607px;width:43px;text-align:right;top:468.08px;color:#2f6eb2">1,635,986</div>
<div class="t c tr" style="left:651px;width:44.2px;text-align:right;top:468.08px;color:#2f6eb2">1,798,002</div>
<div class="t c tr" style="left:697px;width:45px;text-align:right;top:468.08px;color:#2f6eb2">1,954,959</div>
<div class="t c tr" style="left:743px;width:44px;text-align:right;top:468.08px;color:#2f6eb2">2,260,948</div>
<div class="t c tr" style="left:788px;width:43px;text-align:right;top:468.08px;color:#2f6eb2">2,565,545</div>
<div class="t c tr" style="left:832px;width:45px;text-align:right;top:468.08px;color:#2f6eb2">2,747,088</div>
<div class="t c tr" style="left:878px;width:48px;text-align:right;top:468.08px;color:#2f6eb2">13,444,591</div>
<div class="t c tr" style="left:198px;width:43.5px;text-align:right;top:492.68px;color:#2f6eb2">218,405</div>
<div class="t c tr" style="left:241px;width:46.7px;text-align:right;top:492.68px;color:#2f6eb2">454,364</div>
<div class="t c tr" style="left:288px;width:45px;text-align:right;top:492.68px;color:#2f6eb2">569,133</div>
<div class="t c tr" style="left:334px;width:47.5px;text-align:right;top:492.68px;color:#2f6eb2">737,048</div>
<div class="t c tr" style="left:382px;width:44.3px;text-align:right;top:492.68px;color:#2f6eb2">909,803</div>
<div class="t c tr" style="left:428px;width:43.2px;text-align:right;top:492.68px;color:#2f6eb2">1,087,806</div>
<div class="t c tr" style="left:473px;width:43px;text-align:right;top:492.68px;color:#2f6eb2">1,269,569</div>
<div class="t c tr" style="left:517px;width:44px;text-align:right;top:492.68px;color:#2f6eb2">1,330,228</div>
<div class="t c tr" style="left:562px;width:43.2px;text-align:right;top:492.68px;color:#2f6eb2">1,479,288</div>
<div class="t c tr" style="left:607px;width:43px;text-align:right;top:492.68px;color:#2f6eb2">1,635,986</div>
<div class="t c tr" style="left:651px;width:44.2px;text-align:right;top:492.68px;color:#2f6eb2">1,798,002</div>
<div class="t c tr" style="left:697px;width:45px;text-align:right;top:492.68px;color:#2f6eb2">1,954,959</div>
<div class="t c tr" style="left:743px;width:44px;text-align:right;top:492.68px;color:#2f6eb2">2,260,948</div>
<div class="t c tr" style="left:788px;width:43px;text-align:right;top:492.68px;color:#2f6eb2">2,565,545</div>
<div class="t c tr" style="left:832px;width:45px;text-align:right;top:492.68px;color:#2f6eb2">2,747,088</div>
<div class="t c tr" style="left:198px;width:43.5px;text-align:right;top:504.88px;color:#2f6eb2">218,405</div>
<div class="t c tr" style="left:241px;width:46.7px;text-align:right;top:504.88px;color:#2f6eb2">454,364</div>
<div class="t c tr" style="left:288px;width:45px;text-align:right;top:504.88px;color:#2f6eb2">569,133</div>
<div class="t c tr" style="left:334px;width:47.5px;text-align:right;top:504.88px;color:#2f6eb2">737,048</div>
<div class="t c tr" style="left:382px;width:44.3px;text-align:right;top:504.88px;color:#2f6eb2">909,803</div>
<div class="t c tr" style="left:428px;width:43.2px;text-align:right;top:504.88px;color:#2f6eb2">1,087,806</div>
<div class="t c tr" style="left:473px;width:43px;text-align:right;top:504.88px;color:#2f6eb2">1,269,569</div>
<div class="t c tr" style="left:517px;width:44px;text-align:right;top:504.88px;color:#2f6eb2">1,330,228</div>
<div class="t c tr" style="left:562px;width:43.2px;text-align:right;top:504.88px;color:#2f6eb2">1,479,288</div>
<div class="t c tr" style="left:607px;width:43px;text-align:right;top:504.88px;color:#2f6eb2">1,635,986</div>
<div class="t c tr" style="left:651px;width:44.2px;text-align:right;top:504.88px;color:#2f6eb2">1,798,002</div>
<div class="t c tr" style="left:697px;width:45px;text-align:right;top:504.88px;color:#2f6eb2">1,954,959</div>
<div class="t c tr" style="left:743px;width:44px;text-align:right;top:504.88px;color:#2f6eb2">2,260,948</div>
<div class="t c tr" style="left:788px;width:43px;text-align:right;top:504.88px;color:#2f6eb2">2,565,545</div>
<div class="t c tr" style="left:832px;width:45px;text-align:right;top:504.88px;color:#2f6eb2">2,747,088</div>
<div class="a" style="left:336.5px;top:210.10px;width:2px;height:1px;background:#777"></div>
<div class="a" style="left:428.5px;top:210.10px;width:2px;height:1px;background:#777"></div>
<div class="a" style="left:790.5px;top:210.10px;width:2px;height:1px;background:#777"></div>
<div class="a" style="left:834.5px;top:210.10px;width:2px;height:1px;background:#777"></div>
<div class="a" style="left:385.5px;top:410.40px;width:2px;height:1px;background:#777"></div>
<div class="a" style="left:987px;top:51px;width:13px;height:507px;background:#f8f8f8;border-left:1px solid #dedede"></div>
<svg class="a" style="left:990px;top:52px" width="8" height="6" viewBox="0 0 8 6"><path d="M1 5 L4 1 L7 5 Z" fill="#666"/></svg>
<div class="a" style="left:991px;top:62px;width:6px;height:131px;background:#858585;border-radius:3px"></div>
<svg class="a" style="left:990px;top:551px" width="8" height="6" viewBox="0 0 8 6"><path d="M1 1 L4 5 L7 1 Z" fill="#666"/></svg>
<div class="a" style="left:0;top:558.5px;width:1000px;height:18.2px;background:#e6e7ea"></div>
<div class="a" style="left:72.2px;top:558px;width:45px;height:18px;background:#fff"></div>
<div class="a" style="left:79px;top:574.2px;width:33px;height:1.5px;background:#217346"></div>
<div class="t" style="left:79px;top:562.2px;font-size:9.9px;color:#222;font-weight:bold;line-height:11px;transform:scaleX(0.857);transform-origin:0 50%">BS 2025</div>
<svg class="a" style="left:15.5px;top:564px" width="6" height="9" viewBox="0 0 6 9"><path d="M5 1 L1.5 4.5 L5 8" fill="none" stroke="#999" stroke-width="1"/></svg>
<svg class="a" style="left:36px;top:564px" width="6" height="9" viewBox="0 0 6 9"><path d="M1 1 L4.5 4.5 L1 8" fill="none" stroke="#999" stroke-width="1"/></svg>
<div class="a" style="left:57px;top:568px;width:1.6px;height:1.6px;background:#333"></div>
<div class="a" style="left:60px;top:568px;width:1.6px;height:1.6px;background:#333"></div>
<div class="a" style="left:63px;top:568px;width:1.6px;height:1.6px;background:#333"></div>
<div class="a" style="left:652px;top:559.5px;width:39px;height:16.7px;background:#fcf88c;border-radius:2px"></div>
<div class="tab" style="left:130px">Statements Summary 2025</div>
<div class="tab" style="left:256px">PAYG 2025 Charts</div>
<div class="tab" style="left:346px">CAPEX 2025</div>
<div class="tab" style="left:412px">OPEX 2025</div>
<div class="tab" style="left:474px">2026 Accounts</div>
<div class="tab" style="left:552px">2026 MRR Dashboard</div>
<div class="tab" style="left:656px">IS 2026</div>
<div class="tab" style="left:703px">CF 2026</div>
<div class="tab" style="left:753px">BS 2026</div>
<div class="tab" style="left:803px">Statements Summary 2026</div>
<div class="a" style="left:881px;top:558.5px;width:119px;height:18.2px;background:#e6e7ea"></div>
<div class="a" style="left:887px;top:568px;width:1.6px;height:1.6px;background:#333"></div>
<div class="a" style="left:890px;top:568px;width:1.6px;height:1.6px;background:#333"></div>
<div class="a" style="left:893px;top:568px;width:1.6px;height:1.6px;background:#333"></div>
<div class="t" style="left:908px;top:562.5px;font-size:12.5px;color:#333">+</div>
<div class="a" style="left:931px;top:564px;width:1.5px;height:1.5px;background:#444"></div>
<div class="a" style="left:931px;top:567.5px;width:1.5px;height:1.5px;background:#444"></div>
<div class="a" style="left:931px;top:571px;width:1.5px;height:1.5px;background:#444"></div>
<svg class="a" style="left:945px;top:565px" width="5" height="7" viewBox="0 0 5 7"><path d="M4.5 0.5 L0.5 3.5 L4.5 6.5 Z" fill="#555"/></svg>
<div class="a" style="left:953px;top:566px;width:21px;height:5px;background:#707070;border-radius:2.5px"></div>
<svg class="a" style="left:981px;top:565px" width="5" height="7" viewBox="0 0 5 7"><path d="M0.5 0.5 L4.5 3.5 L0.5 6.5 Z" fill="#555"/></svg>
<div class="a" style="left:0;top:576.7px;width:1000px;height:14.3px;background:#f2f2f2"></div>
<div class="t" style="left:7px;top:583.3px;font-size:7px;color:#555">Ready</div>
<svg class="a" style="left:39px;top:582.5px" width="10" height="9" viewBox="0 0 10 9"><rect x="0.5" y="0.5" width="9" height="8" fill="none" stroke="#555"/><rect x="2.5" y="2.5" width="2" height="2" fill="#555"/><rect x="5.5" y="4.5" width="2" height="2" fill="#555"/></svg>
<svg class="a" style="left:59px;top:582px" width="10" height="10" viewBox="0 0 10 10"><circle cx="5" cy="2" r="1.3" fill="#555"/><path d="M1 3.5 H9 M5 3.5 V6.5 L3 9.5 M5 6.5 L7 9.5" fill="none" stroke="#555" stroke-width="1"/></svg>
<div class="t" style="left:72px;top:583px;font-size:7.6px;letter-spacing:-0.42px;color:#222;font-weight:bold">Accessibility: Investigate</div>
<div class="a" style="left:810px;top:578px;width:21px;height:13px;background:#e2e2e2"></div>
<svg class="a" style="left:815px;top:582.5px" width="10" height="10" viewBox="0 0 10 10"><rect x="0.5" y="0.5" width="9" height="9" fill="none" stroke="#666"/><path d="M0.5 3.5 H9.5 M0.5 6.5 H9.5 M3.5 0.5 V9.5 M6.5 0.5 V9.5" stroke="#666"/></svg>
<svg class="a" style="left:840px;top:582.5px" width="10" height="10" viewBox="0 0 10 10"><rect x="0.5" y="0.5" width="9" height="9" fill="none" stroke="#666"/><path d="M3 0.5 V9.5 M5 0.5 V9.5 M7 0.5 V9.5" stroke="#888"/></svg>
<svg class="a" style="left:866px;top:582.5px" width="10" height="10" viewBox="0 0 10 10"><rect x="0.5" y="0.5" width="9" height="9" fill="none" stroke="#666"/><path d="M0.5 5 H6 V9.5 M5 0.5 V3" fill="none" stroke="#666"/></svg>
<div class="a" style="left:886px;top:584.5px;width:4px;height:1px;background:#666"></div>
<div class="a" style="left:895px;top:584.5px;width:70px;height:1px;background:#999"></div>
<div class="a" style="left:928px;top:581px;width:3px;height:8px;background:#555"></div>
<svg class="a" style="left:965px;top:581px" width="7" height="7" viewBox="0 0 7 7"><path d="M3.5 0.5 V6.5 M0.5 3.5 H6.5" stroke="#666"/></svg>
<div class="t" style="left:977px;top:583px;font-size:7px;color:#555">100%</div>
</body></html>
